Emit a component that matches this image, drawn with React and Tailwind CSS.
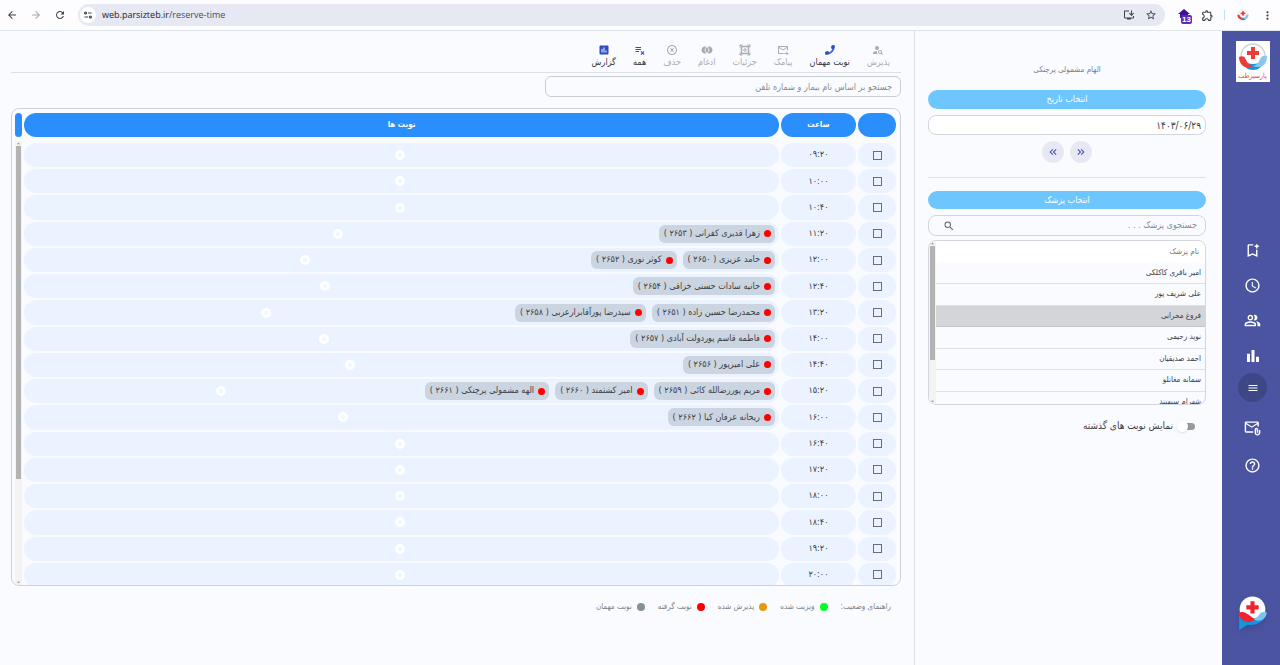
import { useState } from "react";
import {
  MdArrowBack,
  MdArrowForward,
  MdRefresh,
  MdOutlineInstallDesktop,
  MdStarBorder,
  MdOutlineExtension,
  MdMoreVert,
  MdPersonSearch,
  MdOutlineForwardToInbox,
  MdJoinFull,
  MdHighlightOff,
  MdPlaylistRemove,
  MdAssessment,
  MdKeyboardDoubleArrowLeft,
  MdKeyboardDoubleArrowRight,
  MdSearch,
  MdOutlineBookmarkAdd,
  MdAccessTime,
  MdOutlinePeopleAlt,
  MdMenu,
  MdOutlineAttachEmail,
  MdHelpOutline,
} from "react-icons/md";

const rows = [
  { time: "۰۹:۲۰", patients: [] },
  { time: "۱۰:۰۰", patients: [] },
  { time: "۱۰:۴۰", patients: [] },
  { time: "۱۱:۲۰", patients: ["زهرا قدیری کفرانی ( ۲۶۵۳ )"] },
  { time: "۱۲:۰۰", patients: ["حامد عزیزی ( ۲۶۵۰ )", "کوثر نوری ( ۲۶۵۲ )"] },
  { time: "۱۲:۴۰", patients: ["حانیه سادات حسنی خزاقی ( ۲۶۵۴ )"] },
  { time: "۱۳:۲۰", patients: ["محمدرضا حسین زاده ( ۲۶۵۱ )", "سیدرضا پورآقابرارعربی ( ۲۶۵۸ )"] },
  { time: "۱۴:۰۰", patients: ["فاطمه قاسم پوردولت آبادی ( ۲۶۵۷ )"] },
  { time: "۱۴:۴۰", patients: ["علی امیرپور ( ۲۶۵۶ )"] },
  {
    time: "۱۵:۲۰",
    patients: ["مریم پوررضالله کائی ( ۲۶۵۹ )", "امیر کشتمند ( ۲۶۶۰ )", "الهه مشمولی پرچنکی ( ۲۶۶۱ )"],
  },
  { time: "۱۶:۰۰", patients: ["ریحانه عرفان کیا ( ۲۶۶۲ )"] },
  { time: "۱۶:۴۰", patients: [] },
  { time: "۱۷:۲۰", patients: [] },
  { time: "۱۸:۰۰", patients: [] },
  { time: "۱۸:۴۰", patients: [] },
  { time: "۱۹:۲۰", patients: [] },
  { time: "۲۰:۰۰", patients: [] },
];

const doctors = [
  "امیر باقری کاکلکی",
  "علی شریف پور",
  "فروغ محرابی",
  "نوید رحیمی",
  "احمد صدیقیان",
  "سمانه مغانلو",
  "شهرام سپهبند",
];

const legend = [
  { label: "ویزیت شده", color: "bg-[#00ff2a]" },
  { label: "پذیرش شده", color: "bg-[#e59a10]" },
  { label: "نوبت گرفته", color: "bg-[#ff0000]" },
  { label: "نوبت مهمان", color: "bg-[#84919a]" },
];

function DetailsIcon() {
  return (
    <svg viewBox="0 0 24 24" className="h-3 w-3" fill="none" stroke="currentColor" strokeWidth="2">
      <path d="M2 7V2h5M17 2h5v5M22 17v5h-5M7 22H2v-5" />
      <rect x="5" y="5" width="14" height="14" strokeWidth="3" />
      <circle cx="12" cy="12" r="2.5" />
      <path d="M2 2l4 4M22 2l-4 4M2 22l4-4M22 22l-4-4" />
    </svg>
  );
}

function PhoneIcon() {
  return (
    <svg viewBox="0 0 24 24" className="h-3 w-3" fill="currentColor" stroke="currentColor" strokeWidth="1.5">
      <path d="M15.2 8.6l2.2 2.2c-1.4 2.8-3.8 5.1-6.6 6.6l-2.2-2.2c-.3-.3-.7-.3-1-.2-1.1.4-2.3.6-3.6.6-.6 0-1 .4-1 1V20c0 .6.5 1 1 1 9.4 0 17-7.6 17-17 0-.5-.4-1-1-1h-3.5c-.6 0-1 .4-1 1 0 1.2-.2 2.4-.6 3.6-.1.3 0 .7.3 1z" />
    </svg>
  );
}

function BarsIcon({ className }) {
  return (
    <svg viewBox="0 0 24 24" className={className} fill="currentColor">
      <path d="M4 9h4v11H4zM10 4h4v16h-4zM16 13h4v7h-4z" />
    </svg>
  );
}

const tools = [
  { label: "پذیرش", icon: <MdPersonSearch size={12} />, active: false },
  { label: "نوبت مهمان", icon: <PhoneIcon />, active: true },
  { label: "پیامک", icon: <MdOutlineForwardToInbox size={12} />, active: false },
  { label: "جزئیات", icon: <DetailsIcon />, active: false },
  { label: "ادغام", icon: <MdJoinFull size={12} />, active: false },
  { label: "حذف", icon: <MdHighlightOff size={12} />, active: false },
  { label: "همه", icon: <MdPlaylistRemove size={12} />, active: true },
  { label: "گزارش", icon: <MdAssessment size={12} />, active: true },
];

function LogoMark({ className }) {
  return (
    <svg viewBox="0 0 30 30" className={className}>
      <circle cx="15" cy="14" r="12" fill="#fff" stroke="#cfd2d4" strokeWidth="1.4" />
      <path d="M5 18c3 3 6 4 10 4s7-1 10-4c0 7-5 10-10 10S5 25 5 18z" fill="#1296e0" />
      <path d="M1 15c4-2 6 0 7 3 1 3 4 5 7 6-3 3-8 2-11-1-2-2-3-5-3-8z" fill="#ee3b35" />
      <path d="M29 14c-5-1-6 1-8 5-1 3-3 4-6 5 4 2 9 1 11-1 2-2 3-6 3-9z" fill="#8cc6ee" />
      <path d="M13 5h4v4h4v4h-4v4h-4v-4H9V9h4z" fill="#ee3b35" />
    </svg>
  );
}

function BrowserBar() {
  return (
    <header dir="ltr" className="flex h-[31px] items-center border-b border-[#dfe5ec] bg-[#fdfcff] px-1.5 text-[#3f4247]">
      <button aria-label="Back" className="w-3"><MdArrowBack size={12} /></button>
      <button aria-label="Forward" className="ml-3 w-3 text-[#a5a7ad]"><MdArrowForward size={12} /></button>
      <button aria-label="Reload" className="ml-3 w-3"><MdRefresh size={12} /></button>
      <div className="ml-3 flex h-[22px] flex-1 items-center rounded-full bg-[#e6e9f4] pr-2 pl-0.5">
        <span className="flex h-4 w-4 items-center justify-center rounded-full bg-white">
          <svg viewBox="0 0 20 20" className="h-2 w-2" fill="none" stroke="currentColor" strokeWidth="3">
            <circle cx="4" cy="5" r="2.5" />
            <path d="M10 5h9M1 15h9" />
            <circle cx="16" cy="15" r="2.5" />
          </svg>
        </span>
        <span className="ml-1.5 flex-1 font-['Open_Sans',sans-serif] text-[9px] text-[#4a4c52]">
          <span className="text-[#1f2024]">web.parsizteb.ir</span>/reserve-time
        </span>
        <MdOutlineInstallDesktop size={12} />
        <MdStarBorder size={12} className="ml-2.5" />
      </div>
      <div className="relative ml-3 h-4 w-4">
        <svg viewBox="0 0 16 16" className="h-4 w-4" fill="#42109e">
          <path d="M7 2l6 5h-2v4H3V7H1z" />
        </svg>
        <span className="absolute top-2 left-1 rounded-xs bg-[#5a2bb5] px-px font-['Liberation_Sans',sans-serif] text-[8px] leading-[9px] font-bold text-white">
          13
        </span>
      </div>
      <MdOutlineExtension size={13} className="ml-2" />
      <span className="ml-2.5 h-2.5 w-px bg-[#c5dcf7]" />
      <LogoMark className="ml-3 h-3 w-3" />
      <MdMoreVert size={13} className="ml-3" />
    </header>
  );
}

function Sidebar() {
  return (
    <nav className="flex w-[58px] shrink-0 flex-col items-center bg-[#4a54a1] pl-[3px] text-white">
      <div className="mt-2.5 flex h-[41px] w-[34px] flex-col items-center bg-white">
        <LogoMark className="mt-px h-[30px] w-[30px]" />
        <span className="text-[7px] leading-[9px] whitespace-nowrap text-[#ee3b35]">پارسیزطب</span>
      </div>
      <div className="mt-[151px] flex flex-col items-center">
        <button aria-label="رزرو" className="flex h-[35px] items-center"><MdOutlineBookmarkAdd size={17} /></button>
        <button aria-label="ساعت" className="flex h-[35px] items-center"><MdAccessTime size={17} /></button>
        <button aria-label="بیماران" className="flex h-[35px] items-center"><MdOutlinePeopleAlt size={17} /></button>
        <button aria-label="آمار" className="flex h-[35px] items-center"><BarsIcon className="h-[18px] w-[18px]" /></button>
        <button aria-label="منو" className="flex h-[29px] w-[29px] items-center justify-center rounded-full bg-[#3e4785]">
          <MdMenu size={12} />
        </button>
        <button aria-label="پیام ها" className="mt-1.5 flex h-10 items-center"><MdOutlineAttachEmail size={17} /></button>
        <button aria-label="راهنما" className="flex h-[35px] items-center"><MdHelpOutline size={17} /></button>
      </div>
      <button aria-label="پشتیبانی" className="mt-auto mb-[33px]">
        <svg viewBox="0 0 30 36" className="h-[37px] w-[31px] drop-shadow-md">
          <path d="M2 17v17l8-5c8 1 16-2 18-11z" fill="#1296e0" />
          <circle cx="15" cy="14" r="12.5" fill="#fff" />
          <path d="M3 21c6 3 18 3 24-1-2 6-9 9-16 8-4 0-7-3-8-7z" fill="#1296e0" />
          <path d="M1 18c4-3 7-1 10 1s4 4 7 4c-4 5-14 5-17-5z" fill="#ee2430" />
          <path d="M29 17c-5-1-6 0-8 3-2 2-3 3-5 3 4 4 12 2 13-6z" fill="#7cc4f2" />
          <path d="M13 6h4v4h4v4h-4v4h-4v-4H9v-4h4z" fill="#ee2430" />
        </svg>
      </button>
    </nav>
  );
}

function ScrollTrack({ thumb }) {
  return (
    <div className="flex min-h-0 flex-1 flex-col items-center justify-between bg-[#f3f3f4] text-[#8a8a8a]">
      <svg viewBox="0 0 6 6" className="h-[5px] w-[5px] shrink-0" fill="currentColor"><path d="M3 2l2 2H1z" /></svg>
      <div className="flex w-full flex-1 justify-center">
        <div className={thumb} />
      </div>
      <svg viewBox="0 0 6 6" className="h-[5px] w-[5px] shrink-0" fill="currentColor"><path d="M3 4l2-2H1z" /></svg>
    </div>
  );
}

function DoctorPanel() {
  const [doctor, setDoctor] = useState("فروغ محرابی");

  return (
    <aside className="w-[308px] shrink-0 border-l border-[#dde1e7] pr-4 pl-[13px]">
      <p className="mt-[33px] text-center text-[8px] leading-3 text-[#7d7f85]">الهام مشمولی پرچنکی</p>

      <h2 className="mt-3.5 h-[19px] rounded-full bg-[#6ec6ff] text-center text-[9px] leading-[18px] text-white">
        انتخاب تاریخ
      </h2>
      <input
        aria-label="تاریخ"
        defaultValue="۱۴۰۳/۰۶/۲۹"
        className="mt-1.5 block h-5 w-full rounded-lg border border-[#d3d6de] bg-white px-1 text-[10px] text-[#3c3e44]"
      />
      <div className="mt-1.5 flex justify-center gap-1.5 text-[#3d49a8]">
        <button aria-label="روز قبل" className="flex h-[22px] w-[22px] items-center justify-center rounded-full bg-[#e6e8f6]">
          <MdKeyboardDoubleArrowRight size={12} />
        </button>
        <button aria-label="روز بعد" className="flex h-[22px] w-[22px] items-center justify-center rounded-full bg-[#e6e8f6]">
          <MdKeyboardDoubleArrowLeft size={12} />
        </button>
      </div>
      <hr className="mt-3.5 border-[#dcdfe5]" />

      <h2 className="mt-[13px] h-[18px] rounded-full bg-[#6ec6ff] text-center text-[9px] leading-[18px] text-white">
        انتخاب پزشک
      </h2>
      <div className="mt-1.5 flex h-[21px] items-center rounded-lg border border-[#d3d6de] pr-2 pl-4">
        <input
          aria-label="جستجوی پزشک"
          placeholder="جستجوی پزشک . . ."
          className="min-w-0 flex-1 text-[9px] placeholder:text-[#8a8c92] focus:outline-none"
        />
        <MdSearch size={12} className="-ml-0.5 text-[#606268]" />
      </div>

      <div className="mt-1 flex h-[165px] overflow-hidden rounded-lg border border-[#d3d6de] text-[8px] text-[#3c3e44]">
        <div className="grid h-[172px] flex-1 auto-rows-fr">
          <div className="flex items-center bg-white pr-1.5 text-[#75777d]">نام پزشک</div>
          {doctors.map((name) => (
            <button
              key={name}
              onClick={() => setDoctor(name)}
              className={
                name === doctor
                  ? "flex items-center border-b border-[#c2c4c9] bg-[#d4d5d9] pr-1"
                  : "flex items-center border-b border-[#dfe2e7] pr-1"
              }
            >
              {name}
            </button>
          ))}
        </div>
        <div className="flex w-[7px] flex-col">
          <ScrollTrack thumb="h-[114px] w-[5px] bg-[#b3b3b3]" />
        </div>
      </div>

      <label className="mt-[15px] flex items-center gap-2 pr-[11px] text-[10px] leading-3 text-[#3c3e44]">
        <span className="relative h-[7px] w-[14px] rounded-full bg-[#9a9a9a]">
          <input type="checkbox" className="absolute top-0 left-0 h-full w-full appearance-none" />
          <span className="absolute -top-0.5 -left-1 h-[11px] w-[11px] rounded-full bg-white shadow" />
        </span>
        نمایش نوبت های گذشته
      </label>
    </aside>
  );
}

function Toolbar() {
  return (
    <div className="flex h-[42px] items-end gap-[17px] border-b border-[#dcdfe5] pr-[11px] pb-1">
      {tools.map((tool) => (
        <button
          key={tool.label}
          disabled={!tool.active}
          className={
            tool.active
              ? "flex flex-col items-center text-[9px] leading-3 text-[#33353b]"
              : "flex flex-col items-center text-[9px] leading-3 text-[#a9abb1]"
          }
        >
          <span className={tool.active ? "text-[#2f4dc0]" : "text-[#a9abb1]"}>{tool.icon}</span>
          {tool.label}
        </button>
      ))}
    </div>
  );
}

function AddButton() {
  return (
    <button aria-label="افزودن نوبت" className="text-white">
      <svg viewBox="0 0 20 20" className="h-[10px] w-[10px]" fill="none" stroke="currentColor" strokeWidth="6">
        <circle cx="10" cy="10" r="7" />
        <path d="M10 7v6M7 10h6" strokeWidth="1" />
      </svg>
    </button>
  );
}

function Schedule() {
  return (
    <div className="mt-[11px] flex h-[478px] overflow-hidden rounded-lg border border-[#ced1d8] pt-0.5 pr-0.5 pl-[3px]">
      <div className="min-w-0 flex-1">
        <table className="h-[478px] w-full table-fixed border-separate border-spacing-[2px] text-center text-[9px] text-[#3c3e44]">
          <thead className="text-[8px] text-white after:block after:h-[2px]">
            <tr className="h-6">
              <th className="w-[38px] rounded-full bg-[#2a8efc] p-0" aria-label="انتخاب"></th>
              <th className="w-[75px] rounded-full bg-[#2a8efc] p-0">ساعت</th>
              <th className="rounded-full bg-[#2a8efc] p-0">نوبت ها</th>
            </tr>
          </thead>
          <tbody>
            {rows.map((row) => (
              <tr key={row.time}>
                <td className="rounded-full bg-[#eaf3ff] p-0">
                  <input
                    type="checkbox"
                    aria-label={row.time}
                    className="mx-auto block h-[9px] w-[9px] appearance-none border border-[#6c6e74] checked:bg-[#2a8efc]"
                  />
                </td>
                <td className="rounded-full bg-[#eaf3ff] p-0">{row.time}</td>
                <td className="rounded-full bg-[#eaf3ff] p-0 pr-1">
                  <div className="flex h-[18px] items-center gap-1.5">
                    {row.patients.map((patient) => (
                      <span
                        key={patient}
                        className="flex h-[18px] items-center gap-1 rounded-md bg-[#cbd5e1] pr-1 pl-[5px] whitespace-nowrap"
                      >
                        <span className="h-[7px] w-[7px] rounded-full bg-[#ff0000]" />
                        {patient}
                      </span>
                    ))}
                    <span className="flex flex-1 justify-center">
                      <AddButton />
                    </span>
                  </div>
                </td>
              </tr>
            ))}
          </tbody>
        </table>
      </div>
      <div className="flex w-[7px] flex-col pt-0.5">
        <div className="mb-1 h-6 shrink-0 rounded-full bg-[#2a8efc]" />
        <ScrollTrack thumb="h-[333px] w-[5px] bg-[#b3b3b3]" />
      </div>
    </div>
  );
}

function App() {
  return (
    <div
      dir="rtl"
      lang="fa"
      className="flex min-h-screen flex-col bg-[#fafbff] font-['DejaVu_Sans_Condensed','DejaVu_Sans',sans-serif]"
    >
      <BrowserBar />
      <div className="flex flex-1">
        <Sidebar />
        <DoctorPanel />
        <main className="min-w-0 flex-1 pr-[13px] pl-[11px]">
          <Toolbar />
          <input
            aria-label="جستجو"
            placeholder="جستجو بر اساس نام بیمار و شماره تلفن"
            className="mt-[3px] block h-[21px] w-2/5 rounded-md border border-[#c9ccd3] px-2 text-[9px] placeholder:text-[#8a8c92]"
          />
          <Schedule />
          <div className="mt-[15px] flex items-center gap-[13px] pr-2.5 text-[8px] leading-3 text-[#7d7f85]">
            <span>راهنمای وضعیت:</span>
            {legend.map((item) => (
              <span key={item.label} className="flex items-center gap-[5px]">
                <span className={`h-2 w-2 rounded-full ${item.color}`} />
                {item.label}
              </span>
            ))}
          </div>
        </main>
      </div>
    </div>
  );
}

export default App;
